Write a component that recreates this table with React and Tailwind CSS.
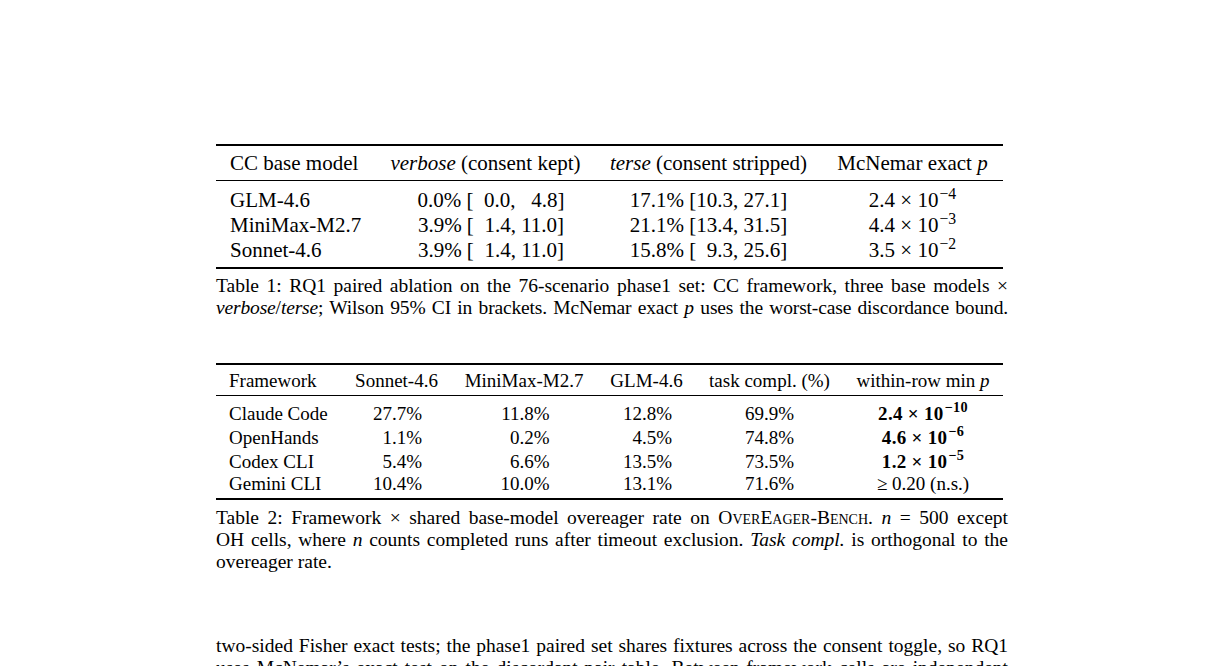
import React from 'react';

// --- Table data ---
const ablationRows = [
  { model: 'GLM-4.6', verbose: ['0.0', '\u20070.0', '\u20074.8'], terse: ['17.1', '10.3', '27.1'], p: ['2.4', '\u22124'] },
  { model: 'MiniMax-M2.7', verbose: ['3.9', '\u20071.4', '11.0'], terse: ['21.1', '13.4', '31.5'], p: ['4.4', '\u22123'] },
  { model: 'Sonnet-4.6', verbose: ['3.9', '\u20071.4', '11.0'], terse: ['15.8', '\u20079.3', '25.6'], p: ['3.5', '\u22122'] },
];

const frameworkRows = [
  { name: 'Claude Code', s: '27.7%', m: '11.8%', g: '12.8%', task: '69.9%', p: ['2.4', '\u221210'], h: 'h-[24px]' },
  { name: 'OpenHands', s: '1.1%', m: '0.2%', g: '4.5%', task: '74.8%', p: ['4.6', '\u22126'], h: 'h-[24px]' },
  { name: 'Codex CLI', s: '5.4%', m: '6.6%', g: '13.5%', task: '73.5%', p: ['1.2', '\u22125'], h: 'h-[24px]' },
  { name: 'Gemini CLI', s: '10.4%', m: '10.0%', g: '13.1%', task: '71.6%', p: null, h: 'h-[21px]' },
];

const t1Cols = 'grid grid-cols-[160px_219px_227px_181px] items-center';
const t2Cols = 'grid grid-cols-[126px_109px_146px_99px_147px_160px] items-center';

const Interval = ([rate, lo, hi]) => (
  <span className="whitespace-pre">
    {rate}% [{lo}, {hi}]
  </span>
);

const Sci = ({ base, exp, bold }) => (
  <span className={bold ? 'font-bold whitespace-pre tracking-[0.3px]' : 'whitespace-pre'}>
    {base} × 10<sup className="ml-[1px]">{exp}</sup>
  </span>
);

// each full line justified edge to edge, like the typeset page
const JLine = ({ children }) => (
  <div className="text-justify [text-align-last:justify] whitespace-nowrap">{children}</div>
);

export default function App() {
  return (
    <div className="h-[666px] w-[1224px] overflow-hidden bg-white text-black font-['Liberation_Serif','Times_New_Roman',serif]">
      <div className="w-[792px] mx-auto pt-[144px]">
        {/* Table 1 */}
        <div className="w-[787px] text-[21px] leading-none">
          <div className="border-t-2 border-black" />
          <div className={`${t1Cols} h-[35px] border-b border-black`}>
            <div className="pl-[14px]">CC base model</div>
            <div className="text-center"><i>verbose</i> (consent kept)</div>
            <div className="text-center"><i>terse</i> (consent stripped)</div>
            <div className="text-center">McNemar exact <i>p</i></div>
          </div>
          <div className="pt-[7px] pb-[4px]">
            {ablationRows.map((r) => (
              <div key={r.model} className={`${t1Cols} h-[25px]`}>
                <div className="pl-[14px]">{r.model}</div>
                <div className="text-center pl-[11px]">{Interval(r.verbose)}</div>
                <div className="text-center">{Interval(r.terse)}</div>
                <div className="text-center"><Sci base={r.p[0]} exp={r.p[1]} /></div>
              </div>
            ))}
          </div>
          <div className="border-t-2 border-black" />
        </div>

        <div className="mt-[6px] text-[19.5px] leading-[22px]">
          <JLine>Table 1: RQ1 paired ablation on the 76-scenario phase1 set: CC framework, three base models ×</JLine>
          <JLine>
            <span className="tracking-[-0.15px]">
              <i>verbose</i>/<i>terse</i>; Wilson 95% CI in brackets. McNemar exact <i>p</i> uses the worst-case discordance bound.
            </span>
          </JLine>
        </div>

        {/* Table 2 */}
        <div className="mt-[44px] w-[787px] text-[19px] leading-none">
          <div className="border-t-2 border-black" />
          <div className={`${t2Cols} h-[31px] border-b border-black`}>
            <div className="pl-[13px]">Framework</div>
            <div className="text-center">Sonnet-4.6</div>
            <div className="text-center">MiniMax-M2.7</div>
            <div className="text-center">GLM-4.6</div>
            <div className="text-center">task compl. (%)</div>
            <div className="text-center">within-row min <i>p</i></div>
          </div>
          <div className="pt-[5px] pb-[4px]">
            {frameworkRows.map((r) => (
              <div key={r.name} className={`${t2Cols} ${r.h}`}>
                <div className="pl-[13px]">{r.name}</div>
                {[r.s, r.m, r.g].map((v, i) => (
                  <div key={i} className="flex justify-center">
                    <span className="inline-block w-[51px] text-right">{v}</span>
                  </div>
                ))}
                <div className="text-center">{r.task}</div>
                <div className="text-center">
                  {r.p ? <Sci base={r.p[0]} exp={r.p[1]} bold /> : <span>≥ 0.20 (n.s.)</span>}
                </div>
              </div>
            ))}
          </div>
          <div className="border-t-2 border-black" />
        </div>

        <div className="mt-[7px] text-[19.5px] leading-[22px]">
          <JLine>
            Table 2: Framework × shared base-model overeager rate on{' '}
            <span className="[font-variant:small-caps]">OverEager-Bench</span>. <i>n</i> = 500 except
          </JLine>
          <JLine>
            OH cells, where <i>n</i> counts completed runs after timeout exclusion. <i>Task compl.</i> is orthogonal to the
          </JLine>
          <div>overeager rate.</div>
        </div>

        {/* Body text */}
        <div className="mt-[62px] text-[19.5px] leading-[22px]">
          <JLine>two-sided Fisher exact tests; the phase1 paired set shares fixtures across the consent toggle, so RQ1</JLine>
          <JLine>uses McNemar’s exact test on the discordant-pair table. Between-framework cells are independent</JLine>
        </div>
      </div>
    </div>
  );
}
